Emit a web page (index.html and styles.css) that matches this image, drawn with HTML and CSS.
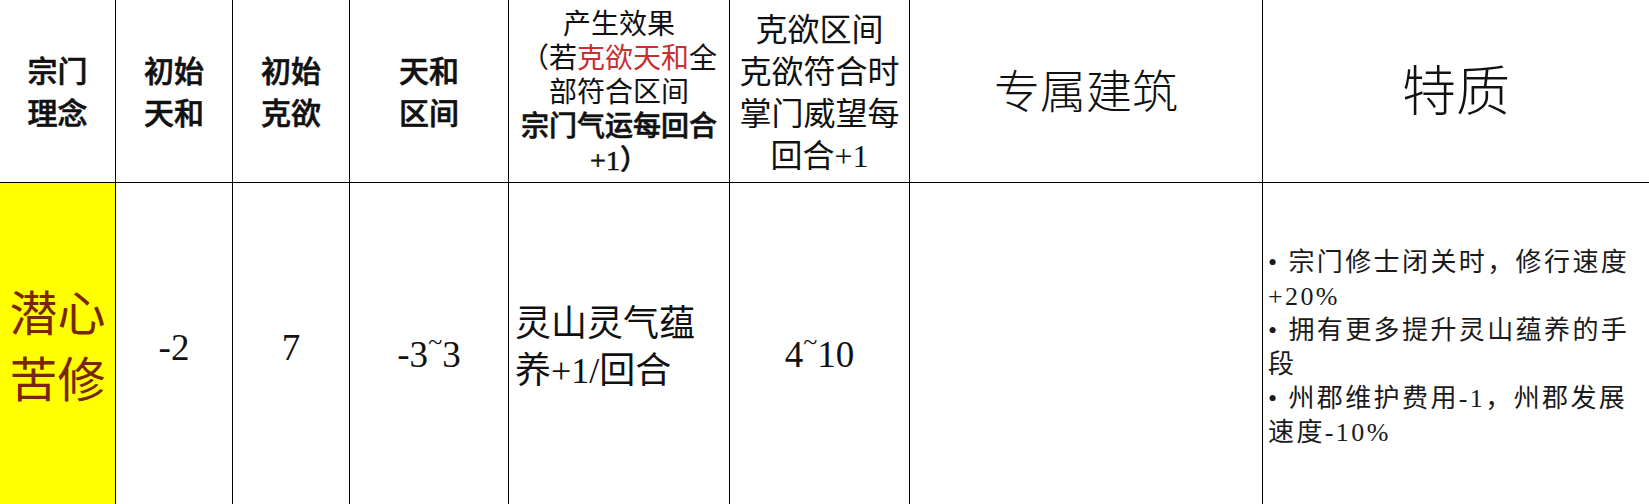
FILE: index.html
```html
<!DOCTYPE html>
<html lang="zh-CN">
<head>
<meta charset="utf-8">
<title>宗门理念</title>
<link rel="stylesheet" href="styles.css">
</head>
<body>
<div class="sheet">
  <div class="cell head h-small"><div class="in bold">宗门<br>理念</div></div>
  <div class="cell head h-small"><div class="in bold">初始<br>天和</div></div>
  <div class="cell head h-small"><div class="in bold">初始<br>克欲</div></div>
  <div class="cell head h-small"><div class="in bold">天和<br>区间</div></div>
  <div class="cell head h-effect"><div class="in">产生效果<br>（若<span class="red">克欲天和</span>全<br>部符合区间<br><span class="bold">宗门气运每回合<br>+1）</span></div></div>
  <div class="cell head h-range"><div class="in">克欲区间<br>克欲符合时<br>掌门威望每<br>回合+1</div></div>
  <div class="cell head h-build"><div class="in">专属建筑</div></div>
  <div class="cell head h-trait last"><div class="in">特质</div></div>

  <div class="cell name"><div class="in">潜心<br>苦修</div></div>
  <div class="cell num"><div class="in">-2</div></div>
  <div class="cell num"><div class="in">7</div></div>
  <div class="cell num"><div class="in">-3<span class="tilde">~</span>3</div></div>
  <div class="cell effect"><div class="in">灵山灵气蕴<br>养+1/回合</div></div>
  <div class="cell num"><div class="in">4<span class="tilde">~</span>10</div></div>
  <div class="cell"></div>
  <div class="cell traits last">
    <div class="in">
      <p class="trait">• 宗门修士闭关时，修行速度+20%</p>
      <p class="trait">• 拥有更多提升灵山蕴养的手段</p>
      <p class="trait">• 州郡维护费用-1，州郡发展速度-10%</p>
    </div>
  </div>
</div>
</body>
</html>
```

FILE: styles.css
```css
html, body {
  margin: 0;
  padding: 0;
  background: #ffffff;
  overflow: hidden;
}

.sheet {
  display: grid;
  grid-template-columns: 116px 117px 117px 159px 221px 180px 353px 1fr;
  grid-template-rows: 183px 330px;
  width: 1649px;
  font-family: "Liberation Serif", "Noto Sans CJK SC", serif;
  color: #111111;
}

.cell {
  box-sizing: border-box;
  border-right: 1px solid #000000;
  display: flex;
  align-items: center;
  justify-content: center;
  text-align: center;
  min-width: 0;
}

.cell.last {
  border-right: none;
}

.in {
  min-width: 0;
}

.head {
  border-bottom: 1px solid #000000;
  padding-top: 3px;
}

.bold {
  font-weight: 500;
}

.h-small {
  font-size: 30px;
  line-height: 42px;
}

.h-small .bold {
  -webkit-text-stroke: 0.6px #111111;
}

.h-effect {
  font-size: 28px;
  line-height: 34px;
}

.h-effect .bold {
  -webkit-text-stroke: 0.6px #111111;
}

.red {
  color: #c8302f;
}

.h-range {
  font-size: 32px;
  line-height: 42px;
}

.h-build {
  font-size: 46px;
  line-height: 52px;
  font-weight: 300;
}

.h-trait {
  font-size: 54px;
  line-height: 60px;
  font-weight: 300;
}

.name {
  background: #ffff00;
  color: #7a2600;
  font-size: 48px;
  line-height: 66px;
}

.num {
  font-size: 37px;
  line-height: 44px;
}

.tilde {
  font-size: 26px;
  vertical-align: 17px;
}

.effect {
  justify-content: flex-start;
  text-align: left;
  padding-left: 6px;
  font-size: 36px;
  line-height: 47px;
}

.traits {
  justify-content: stretch;
  text-align: left;
  padding: 0 6px 0 5px;
  font-size: 26px;
  line-height: 34px;
  letter-spacing: 2.4px;
  color: #1a1a1a;
}

.traits .in {
  width: 100%;
}

.trait {
  margin: 0;
}
```
